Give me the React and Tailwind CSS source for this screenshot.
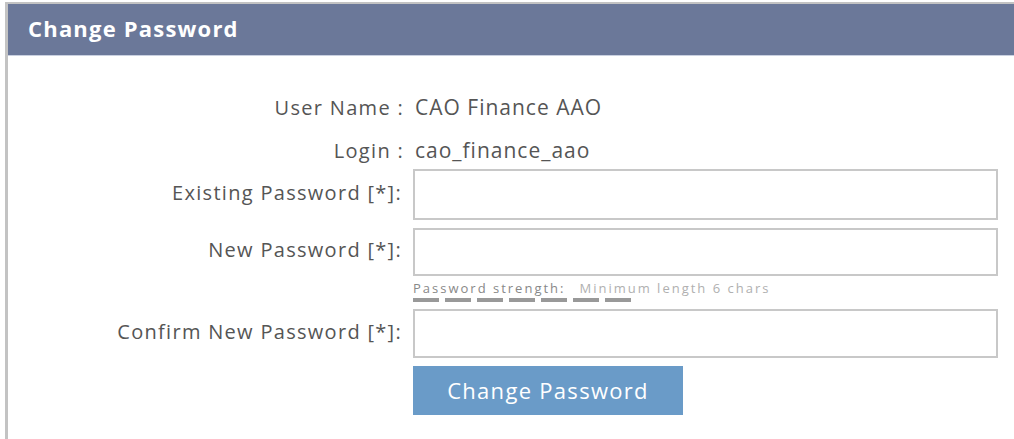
import React from 'react';

const font = { fontFamily: '"Open Sans", "Noto Sans", sans-serif' };

// one form row: right-aligned label beside the input column
function Field({ label, height, children, className = '' }) {
  return (
    <div className={`flex ${className}`}>
      <div
        className="w-[394px] shrink-0 flex items-center justify-end pb-[4px] text-[20px] tracking-[1.3px] text-[#555]"
        style={{ height }}
      >
        {label}
      </div>
      <div className="flex-1 pl-[11px] pr-[16px]">{children}</div>
    </div>
  );
}

export default function App() {
  const bars = [0, 1, 2, 3, 4, 5, 6];
  return (
    <div className="w-[1014px] h-[439px] bg-white pl-[5px] pt-[2px]" style={font}>
      <div className="h-full border-l-[3px] border-t-2 border-[#c3c3c3]">
        <div className="h-[52px] bg-[#6b7899] border-b border-[#c9d0e0] flex items-center pl-[20px] pb-[2px]">
          <h1 className="text-white font-bold text-[22px] tracking-[1.2px]">Change Password</h1>
        </div>

        <div className="pt-[37px]">
          <div className="flex items-center h-[30px]">
            <div className="w-[396px] text-right text-[20px] tracking-[1.3px] text-[#555]">User Name :</div>
            <div className="pl-[11px] text-[21px] tracking-[1px] text-[#555]">CAO Finance AAO</div>
          </div>
          <div className="flex items-center h-[30px] mt-[13px]">
            <div className="w-[396px] text-right text-[20px] tracking-[1.3px] text-[#555]">Login :</div>
            <div className="pl-[11px] text-[21px] tracking-[1px] text-[#555]">cao_finance_aao</div>
          </div>

          <Field label="Existing Password [*]:" height={51} className="mt-[3px]">
            <input type="password" className="block w-full h-[51px] border-2 border-[#c8c8c8] outline-none" />
          </Field>

          <Field label="New Password [*]:" height={48} className="mt-[8px]">
            <input type="password" className="block w-full h-[48px] border-2 border-[#c8c8c8] outline-none" />
            <div className="text-[13px] leading-[16px] tracking-[2px] mt-[4px]">
              <span className="text-[#888]">Password strength:</span>
              <span className="text-[#b0b0b0] ml-[14px]">Minimum length 6 chars</span>
            </div>
            <div className="flex gap-[6px] mt-[2px]">
              {bars.map((b) => (
                <div key={b} className="w-[26px] h-[4px] bg-[#999]" />
              ))}
            </div>
          </Field>

          <Field label="Confirm New Password [*]:" height={49} className="mt-[7px]">
            <input type="password" className="block w-full h-[49px] border-2 border-[#c8c8c8] outline-none" />
            <button className="mt-[8px] w-[270px] h-[49px] bg-[#6a9bc8] text-white text-[22px] tracking-[1.3px]">
              Change Password
            </button>
          </Field>
        </div>
      </div>
    </div>
  );
}
